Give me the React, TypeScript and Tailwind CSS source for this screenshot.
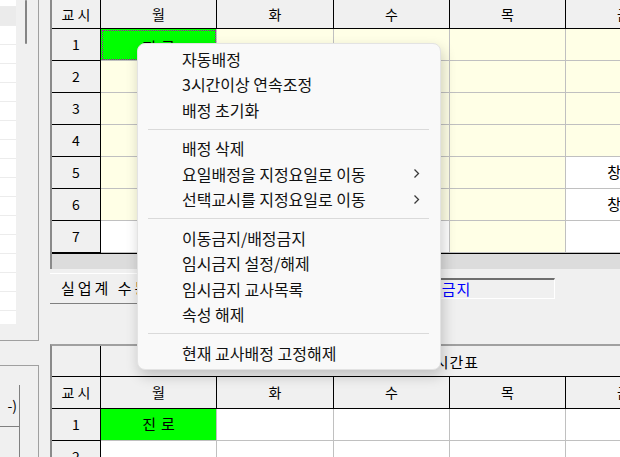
import { ReactNode } from "react";

const DAYS = ["월", "화", "수", "목", "금"];
const COL_W = ["w-[116px]", "w-[117px]", "w-[116px]", "w-[116px]", "w-[116px]"];

type Cell = { bg: string; text?: string; focus?: boolean };

const Y = "bg-[#ffffe6]";
const W = "bg-white";
const G = "bg-[#00ff00]";

const topRows: Cell[][] = [
  [{ bg: G, text: "진로", focus: true }, { bg: Y }, { bg: Y }, { bg: Y }, { bg: Y }],
  [{ bg: Y }, { bg: Y }, { bg: Y }, { bg: Y }, { bg: Y }],
  [{ bg: Y }, { bg: Y }, { bg: Y }, { bg: Y }, { bg: Y }],
  [{ bg: Y }, { bg: Y }, { bg: Y }, { bg: Y }, { bg: Y }],
  [{ bg: Y }, { bg: Y }, { bg: Y }, { bg: Y }, { bg: W, text: "창체" }],
  [{ bg: Y }, { bg: Y }, { bg: Y }, { bg: Y }, { bg: W, text: "창체" }],
  [{ bg: W }, { bg: W }, { bg: W }, { bg: Y }, { bg: W }],
];

const bottomRows: Cell[][] = [
  [{ bg: G, text: "진로" }, { bg: W }, { bg: W }, { bg: W }, { bg: W }],
  [{ bg: W }, { bg: W }, { bg: W }, { bg: W }, { bg: W }],
];

function HeaderRow({ h }: { h: string }) {
  return (
    <div className={`flex ${h}`}>
      <div className="w-[49px] shrink-0 bg-[#f0f0f0] border-r border-b border-black flex items-center justify-center tracking-[3px] pl-[3px]">
        교시
      </div>
      {DAYS.map((d, i) => (
        <div
          key={d}
          className={`${COL_W[i]} shrink-0 bg-[#f0f0f0] border-r border-b border-black flex items-center justify-center`}
        >
          {d}
        </div>
      ))}
    </div>
  );
}

function BodyRow({ n, cells }: { n: number; cells: Cell[] }) {
  return (
    <div className="flex h-[32px]">
      <div className="w-[49px] shrink-0 bg-[#f0f0f0] border-r border-b border-black flex items-center justify-center">
        {n}
      </div>
      {cells.map((c, i) => (
        <div
          key={i}
          className={`${COL_W[i]} shrink-0 ${c.bg} border-r border-b border-[#c0c0c0] flex items-center justify-center text-[15px] tracking-[5px] pl-[5px] ${
            c.focus ? "outline-1 outline-dotted outline-[#c000c0] -outline-offset-2 pt-[6px]" : ""
          }`}
        >
          {c.text}
        </div>
      ))}
    </div>
  );
}

function Item({ children, sub }: { children: ReactNode; sub?: boolean }) {
  return (
    <div className="h-[25.5px] pl-[44px] pr-[20px] flex items-center justify-between">
      <span>{children}</span>
      {sub && (
        <svg width="7" height="11" viewBox="0 0 7 11">
          <polyline points="1.5,1.5 5.5,5.5 1.5,9.5" fill="none" stroke="#3a3a3a" strokeWidth="1.3" />
        </svg>
      )}
    </div>
  );
}

function Sep() {
  return (
    <div className="h-[13px] flex items-center pl-[10px] pr-[11px]">
      <div className="h-px w-full bg-[#dadada]" />
    </div>
  );
}

export default function App() {
  return (
    <div
      className="relative w-[620px] h-[457px] overflow-hidden bg-[#f0f0f0] flex text-[14px] text-black"
      style={{ fontFamily: '"Noto Sans CJK KR", "Liberation Sans", sans-serif' }}
    >
      {/* left side panels */}
      <div className="w-[50px] shrink-0 flex flex-col">
        <div className="w-[39px] h-[348px] border-r border-b border-[#a0a0a0] flex">
          <div className="w-[16px] h-[324px] bg-white flex flex-col">
            <div className="h-[7px] border-b border-[#ececec]" />
            {Array.from({ length: 16 }).map((_, i) => (
              <div
                key={i}
                className={`h-[19px] shrink-0 border-b border-[#ececec] ${i === 0 ? "bg-[#ebebeb]" : ""}`}
              />
            ))}
          </div>
          <div className="ml-[9px] w-[2px] h-[44px] bg-[#858585] rounded-full" />
        </div>
        <div className="mt-[24px] w-[39px] flex-1 border-t border-r border-[#a0a0a0] pt-[19px]">
          <div className="w-[20px] h-[42px] border-r border-b border-[#808080] bg-[#f0f0f0] flex items-center justify-end pr-[2px] overflow-hidden">
            <span className="whitespace-nowrap">-)</span>
          </div>
          <div className="w-[20px] h-[30px] border-r border-[#808080] bg-[#f0f0f0]" />
        </div>
      </div>

      {/* main area */}
      <div className="flex-1 min-w-0 flex flex-col overflow-hidden">
        <div className="h-[269px] border-l-2 border-[#8a8a8a] flex flex-col">
          <HeaderRow h="h-[29px]" />
          {topRows.map((r, i) => (
            <BodyRow key={i} n={i + 1} cells={r} />
          ))}
          <div className="h-[16px] bg-[#dcdcdc] border-t border-black" />
        </div>

        <div className="mt-[4px] flex items-center">
          <div className="-ml-px w-[283px] h-[31px] border border-t-white border-l-white border-r-[#808080] border-b-[#808080] bg-[#f0f0f0] flex items-center pl-[11px] text-[15px] tracking-[3px]">
            실업계 수동배정
          </div>
          <div className="ml-[9px] w-[214px] h-[21px] border-t-2 border-l-2 border-t-[#6e6e6e] border-l-[#a0a0a0] border-r border-b border-r-white border-b-white bg-[#f0f0f0] flex items-center pl-[3px] text-[15px] text-[#0000ff] tracking-[1px]">
            이동금지/배정금지
          </div>
        </div>

        <div className="mt-[40px] flex-1 border-t-2 border-t-[#a0a0a0] border-l-2 border-[#8a8a8a] flex flex-col">
          <div className="flex h-[31px]">
            <div className="w-[49px] shrink-0 bg-[#f0f0f0] border-r border-b border-black" />
            <div className="w-[581px] shrink-0 bg-[#f0f0f0] border-b border-black flex items-center justify-center text-[15px] tracking-[1px] pt-[3px] pl-[14px]">
              현재 배정 교사의 시간표
            </div>
          </div>
          <HeaderRow h="h-[32px]" />
          {bottomRows.map((r, i) => (
            <BodyRow key={i} n={i + 1} cells={r} />
          ))}
        </div>
      </div>

      {/* context menu */}
      <div className="absolute left-[137px] top-[43px] w-[304px] rounded-[8px] bg-[#f9f9f9] border border-[#e3e3e3] shadow-[2px_6px_14px_rgba(0,0,0,0.2)] pt-[2px] pb-[3px] text-[16px] text-[#111]">
        <Item>자동배정</Item>
        <Item>3시간이상 연속조정</Item>
        <Item>배정 초기화</Item>
        <Sep />
        <Item>배정 삭제</Item>
        <Item sub>요일배정을 지정요일로 이동</Item>
        <Item sub>선택교시를 지정요일로 이동</Item>
        <Sep />
        <Item>이동금지/배정금지</Item>
        <Item>임시금지 설정/해제</Item>
        <Item>임시금지 교사목록</Item>
        <Item>속성 해제</Item>
        <Sep />
        <Item>현재 교사배정 고정해제</Item>
      </div>
    </div>
  );
}
